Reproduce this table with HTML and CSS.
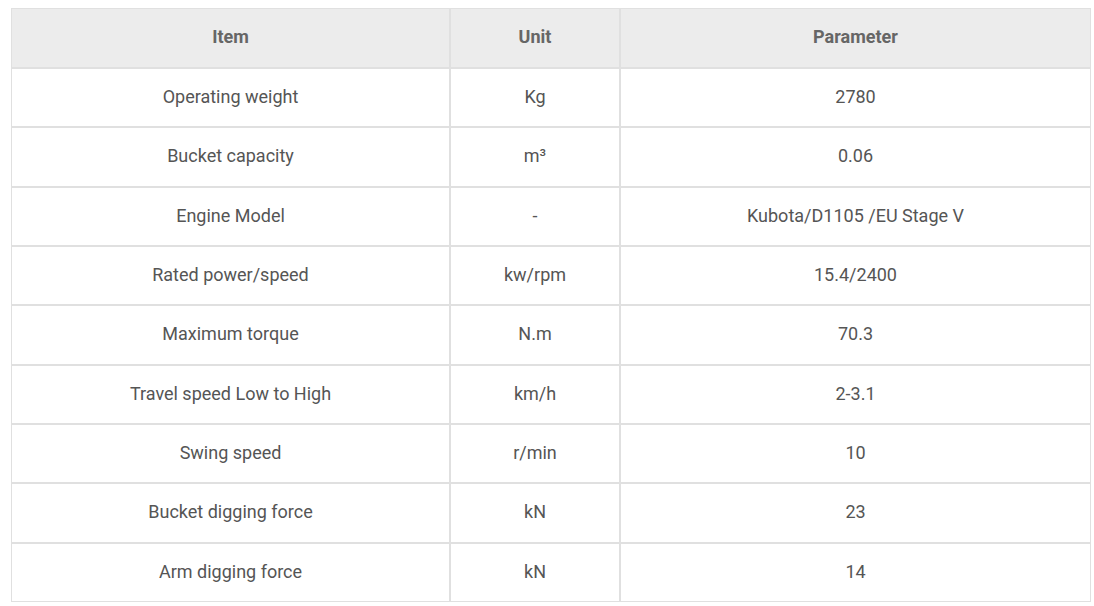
FILE: index.html
```html
<!DOCTYPE html>
<html>
<head>
<meta charset="utf-8">
<link rel="stylesheet" href="styles.css">
</head>
<body>
<table class="spec">
  <colgroup>
    <col class="c1"><col class="c2"><col class="c3">
  </colgroup>
  <thead>
    <tr><th>Item</th><th>Unit</th><th>Parameter</th></tr>
  </thead>
  <tbody>
    <tr><td>Operating weight</td><td>Kg</td><td>2780</td></tr>
    <tr><td>Bucket capacity</td><td>m³</td><td>0.06</td></tr>
    <tr><td>Engine Model</td><td>-</td><td>Kubota/D1105 /EU Stage V</td></tr>
    <tr><td>Rated power/speed</td><td>kw/rpm</td><td>15.4/2400</td></tr>
    <tr><td>Maximum torque</td><td>N.m</td><td>70.3</td></tr>
    <tr><td>Travel speed Low to High</td><td>km/h</td><td>2-3.1</td></tr>
    <tr><td>Swing speed</td><td>r/min</td><td>10</td></tr>
    <tr><td>Bucket digging force</td><td>kN</td><td>23</td></tr>
    <tr><td>Arm digging force</td><td>kN</td><td>14</td></tr>
  </tbody>
</table>
</body>
</html>
```
FILE: styles.css
```css
html, body {
  margin: 0;
  padding: 0;
  background: #fff;
}
body {
  padding: 8px 3px 0 11px;
  font-family: Roboto, "Liberation Sans", sans-serif;
  font-size: 18px;
  color: #555;
}
.spec {
  width: 1080px;
  border-collapse: separate;
  border-spacing: 0;
  table-layout: fixed;
}
.c1 { width: 439px; }
.c2 { width: 170px; }
.c3 { width: 471px; }
.spec th, .spec td {
  border: 1px solid #e0e0e0;
  text-align: center;
  vertical-align: middle;
  box-sizing: border-box;
  padding: 0 10px 1px;
  line-height: 24px;
}
.spec th {
  height: 60px;
  padding-bottom: 3px;
  background: #ececec;
  font-weight: bold;
  color: #666;
}
.spec td {
  height: 59.33px;
}
```
